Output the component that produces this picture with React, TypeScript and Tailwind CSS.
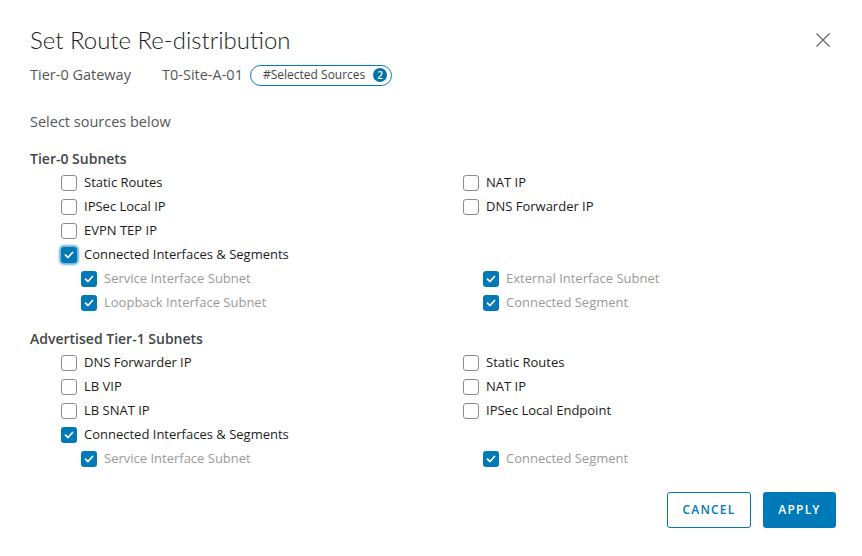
import React from "react";

type Item = { label: string; checked?: boolean; sub?: boolean; focus?: boolean };

function Check({ checked, focus }: { checked?: boolean; focus?: boolean }) {
  if (checked) {
    return (
      <span
        className={
          "flex h-4 w-4 shrink-0 items-center justify-center rounded-[3px] bg-[#0079b8] " +
          (focus ? "shadow-[0_0_2px_2px_rgba(0,121,184,0.55)]" : "")
        }
      >
        <svg width="10" height="8" viewBox="0 0 10 8" fill="none">
          <path d="M1.5 4.2 L4 6.5 L8.5 1.5" stroke="white" strokeWidth="1.8" strokeLinecap="round" strokeLinejoin="round" />
        </svg>
      </span>
    );
  }
  return <span className="h-4 w-4 shrink-0 rounded-[3px] border border-[#8c8c8c] bg-white" />;
}

function Row({ item }: { item?: Item }) {
  if (!item) return <div className="h-6" />;
  return (
    <div className={"flex h-6 items-center gap-[7px] " + (item.sub ? "pl-5" : "")}>
      <Check checked={item.checked} focus={item.focus} />
      <span className={"text-[13px] " + (item.sub ? "text-[#9a9a9a]" : "text-[#1b1b1b]")}>{item.label}</span>
    </div>
  );
}

function Section({ title, left, right }: { title: string; left: Item[]; right: (Item | undefined)[] }) {
  return (
    <div>
      <div className="flex h-6 items-center text-[14px] font-semibold text-[#454545]">{title}</div>
      <div className="mt-[1px] grid grid-cols-[402px_1fr] pl-[31px]">
        {left.map((l, i) => (
          <React.Fragment key={i}>
            <Row item={l} />
            <Row item={right[i]} />
          </React.Fragment>
        ))}
      </div>
    </div>
  );
}

export default function App() {
  const t0Left: Item[] = [
    { label: "Static Routes" },
    { label: "IPSec Local IP" },
    { label: "EVPN TEP IP" },
    { label: "Connected Interfaces & Segments", checked: true, focus: true },
    { label: "Service Interface Subnet", checked: true, sub: true },
    { label: "Loopback Interface Subnet", checked: true, sub: true },
  ];
  const t0Right: (Item | undefined)[] = [
    { label: "NAT IP" },
    { label: "DNS Forwarder IP" },
    undefined,
    undefined,
    { label: "External Interface Subnet", checked: true, sub: true },
    { label: "Connected Segment", checked: true, sub: true },
  ];
  const t1Left: Item[] = [
    { label: "DNS Forwarder IP" },
    { label: "LB VIP" },
    { label: "LB SNAT IP" },
    { label: "Connected Interfaces & Segments", checked: true },
    { label: "Service Interface Subnet", checked: true, sub: true },
  ];
  const t1Right: (Item | undefined)[] = [
    { label: "Static Routes" },
    { label: "NAT IP" },
    { label: "IPSec Local Endpoint" },
    undefined,
    { label: "Connected Segment", checked: true, sub: true },
  ];

  return (
    <div className="h-[556px] w-[862px] bg-white px-[30px] pt-6 font-['Open_Sans',sans-serif]">
      <div className="flex h-8 items-center justify-between">
        <h1 className="font-['Lato',sans-serif] text-[24px] font-light text-[#1b1b1b]">Set Route Re-distribution</h1>
        <button className="mr-[1px] text-[#666]">
          <svg width="16" height="16" viewBox="0 0 16 16" fill="none">
            <path d="M1.5 1.5 L14.5 14.5 M14.5 1.5 L1.5 14.5" stroke="#666" strokeWidth="1.2" />
          </svg>
        </button>
      </div>
      <div className="mt-[9px] flex h-5 items-center text-[14.5px] text-[#565656]">
        <span className="w-[132px]">Tier-0 Gateway</span>
        <span className="w-[88px]">T0-Site-A-01</span>
        <span className="flex h-[21px] w-[142px] items-center rounded-full border border-[#0079b8] pl-3 pr-1 text-[12px] text-[#454545]">
          <span className="flex-1">#Selected Sources</span>
          <span className="flex h-[14px] w-[14px] items-center justify-center rounded-full bg-[#0072a3] text-[10px] font-semibold text-white">
            2
          </span>
        </span>
      </div>
      <div className="mt-[25px] flex h-6 items-center text-[14.5px] text-[#565656]">Select sources below</div>
      <div className="mt-[12px]">
        <Section title="Tier-0 Subnets" left={t0Left} right={t0Right} />
      </div>
      <div className="mt-[11px]">
        <Section title="Advertised Tier-1 Subnets" left={t1Left} right={t1Right} />
      </div>
      <div className="-mr-1 mt-[21px] flex justify-end gap-3">
        <button className="h-9 w-[84px] rounded-[3px] border border-[#0079b8] text-[12px] font-semibold tracking-[0.1em] text-[#0079b8]">
          CANCEL
        </button>
        <button className="h-9 w-[73px] rounded-[3px] bg-[#0079b8] text-[12px] font-semibold tracking-[0.1em] text-white">
          APPLY
        </button>
      </div>
    </div>
  );
}
